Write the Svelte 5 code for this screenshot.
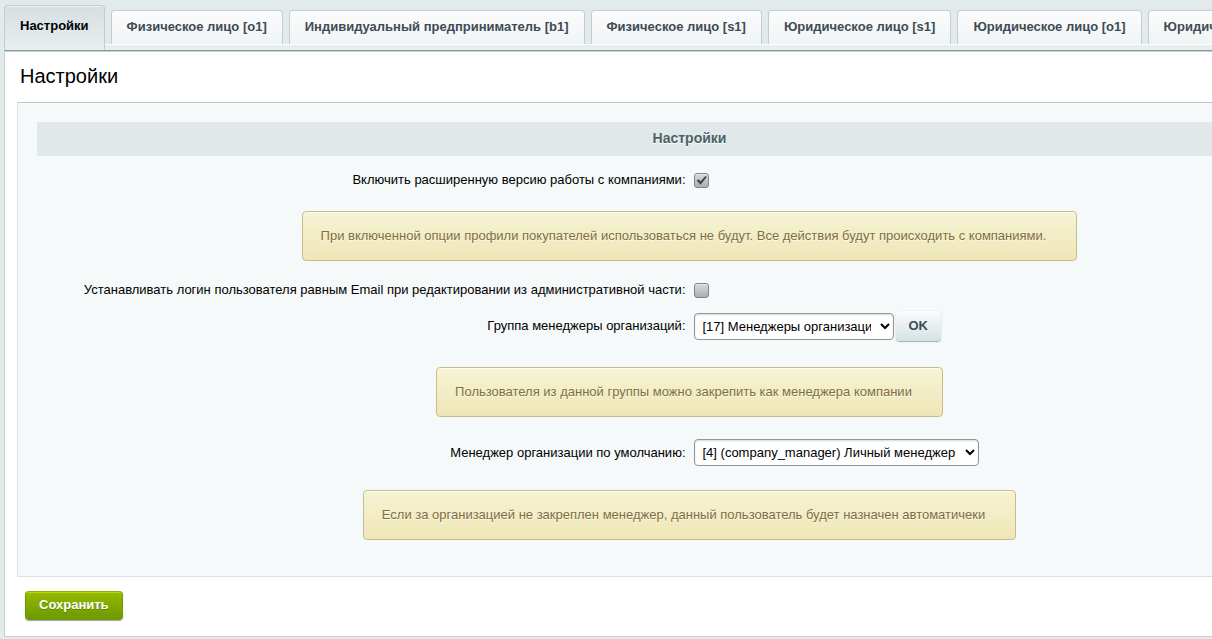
<script>
	const tabs = [
		"Настройки",
		"Физическое лицо [o1]",
		"Индивидуальный предприниматель [b1]",
		"Физическое лицо [s1]",
		"Юридическое лицо [s1]",
		"Юридическое лицо [o1]",
		"Юридическое лицо [b1]",
	];

	let current = 0;
	let extended = true;
	let emailLogin = false;
	let group = "17";
	let manager = "4";
</script>

<div class="page">
	<div class="tabs" role="tablist">
		{#each tabs as tab, i}
			<button
				type="button"
				role="tab"
				class="tab"
				class:active={current === i}
				aria-selected={current === i}
				on:click={() => (current = i)}>{tab}</button
			>
		{/each}
	</div>
	<div class="strip"></div>

	<form class="content" on:submit|preventDefault>
		<h1>Настройки</h1>

		<div class="panel">
			<h2>Настройки</h2>

			<div class="row">
				<label for="extended">Включить расширенную версию работы с компаниями:</label>
				<div class="field">
					<span class="check">
						<input id="extended" type="checkbox" bind:checked={extended} />
						<svg viewBox="0 0 15 15" aria-hidden="true">
							<path d="M2.6 7.6 L4.8 6.3 L6.4 8.6 L11.4 3 L12.8 4.1 L6.6 11.8 Z" />
						</svg>
					</span>
				</div>
			</div>
			<div class="note">
				При включенной опции профили покупателей использоваться не будут. Все действия будут происходить с компаниями.
			</div>

			<div class="row">
				<label for="email">Устанавливать логин пользователя равным Email при редактировании из административной части:</label>
				<div class="field">
					<span class="check">
						<input id="email" type="checkbox" bind:checked={emailLogin} />
						<svg viewBox="0 0 15 15" aria-hidden="true">
							<path d="M2.6 7.6 L4.8 6.3 L6.4 8.6 L11.4 3 L12.8 4.1 L6.6 11.8 Z" />
						</svg>
					</span>
				</div>
			</div>
			<div class="row with-button">
				<label for="group">Группа менеджеры организаций:</label>
				<div class="field">
					<select id="group" class="short" bind:value={group}>
						<option value="17">[17] Менеджеры организации</option>
					</select>
					<button type="button" class="ok">OK</button>
				</div>
			</div>
			<div class="note">Пользователя из данной группы можно закрепить как менеджера компании</div>

			<div class="row with-select">
				<label for="manager">Менеджер организации по умолчанию:</label>
				<div class="field">
					<select id="manager" bind:value={manager}>
						<option value="4">[4] (company_manager) Личный менеджер</option>
					</select>
				</div>
			</div>
			<div class="note">Если за организацией не закреплен менеджер, данный пользователь будет назначен автоматичеки</div>
		</div>

		<button type="submit" class="save">Сохранить</button>
	</form>
</div>

<style>
	:global(body) {
		background: #e2eaec;
	}

	.page {
		box-sizing: border-box;
		min-height: 100vh;
		padding: 5px 0 2px 4px;
		overflow: hidden;
		color: #000;
		font: 13px/16px "Liberation Sans", Arial, sans-serif;
	}

	button,
	select {
		font-family: inherit;
		font-size: 13px;
	}

	/* Tabs */

	.tabs {
		display: flex;
		align-items: flex-end;
		gap: 6px;
	}

	.tab {
		box-sizing: border-box;
		flex: none;
		height: 34px;
		padding: 0 15px 2px;
		border: 1px solid #c3cdd0;
		border-bottom: 0;
		border-radius: 4px 4px 0 0;
		background: linear-gradient(#fbfcfc, #f0f4f5);
		box-shadow: inset 0 1px #fff;
		color: #3f4b54;
		font-weight: bold;
		white-space: nowrap;
		cursor: pointer;
	}

	.tab.active {
		position: relative;
		height: 45px;
		margin-bottom: -6px;
		padding-bottom: 5px;
		background: linear-gradient(#d6dfe2, #e7eeef);
		box-shadow: inset 0 1px #eef3f4;
		color: #000;
	}

	.strip {
		height: 7px;
		box-sizing: border-box;
		border-top: 1px solid #fff;
		border-bottom: 1px solid #8b9799;
		border-left: 1px solid #c3cdd0;
		background: #e7eeef;
	}

	/* Content */

	.content {
		padding: 12px 0 16px 12px;
		border: 1px solid #c3cfd3;
		border-right: 0;
		background: #fff;
	}

	h1 {
		margin: 0 0 14px 3px;
		font-size: 20px;
		font-weight: normal;
		line-height: 24px;
	}

	/* the form is wider than the visible area and is clipped on the right */
	.panel {
		margin-right: -150px;
		padding: 19px 19px 20px;
		border: 1px solid #d7e2e9;
		border-top-color: #bdc8cc;
		background: #f5f9f9;
	}

	h2 {
		margin: 0 0 11px;
		padding-bottom: 2px;
		background: #e0e8ea;
		color: #4b6267;
		font-size: 14px;
		line-height: 32px;
		text-align: center;
		text-shadow: 0 1px #fff;
	}

	.row {
		display: grid;
		grid-template-columns: 1fr 1fr;
		align-items: center;
		min-height: 26px;
	}

	.with-select {
		min-height: 39px;
	}

	.with-button {
		min-height: 46px;
	}

	.row label {
		padding-right: 4px;
		text-align: right;
	}

	.field {
		display: flex;
		align-items: center;
		gap: 2px;
		padding-left: 4px;
	}

	.note {
		box-sizing: border-box;
		width: fit-content;
		margin: 18px auto 16px;
		padding: 16px 30px 16px 18px;
		border: 1px solid #c9bc8a;
		border-radius: 4px;
		background: linear-gradient(#f6f4d5, #eee6b6);
		box-shadow: inset 0 1px #fffde9;
		color: #7d6e48;
		text-shadow: 0 1px #fff9d9;
	}

	.check {
		position: relative;
		width: 15px;
		height: 15px;
	}

	.check input {
		display: block;
		box-sizing: border-box;
		width: 15px;
		height: 15px;
		margin: 0;
		appearance: none;
		border: 1px solid #7e8588;
		border-radius: 3px;
		background: linear-gradient(#d7dadc, #a9afb2);
		box-shadow: inset 0 1px #e6e8e9;
	}

	.check svg {
		display: none;
		position: absolute;
		inset: 0;
		fill: #3f474a;
		pointer-events: none;
	}

	.check input:checked + svg {
		display: block;
	}

	select {
		height: 27px;
		padding: 0 6px 0 4px;
		border: 1px solid #8f9798;
		border-radius: 4px;
		background: #fff;
		box-shadow: inset 0 1px 2px #d5dadc;
		color: #000;
	}

	.short {
		width: 200px;
	}

	.ok {
		height: 30px;
		padding: 0 13px 2px;
		border: 0;
		border-radius: 4px;
		background: linear-gradient(#fbfcfd, #d5e1e4);
		box-shadow: 0 1px 1px #a3adb0, 0 0 1px #b4bec1;
		color: #3f4b54;
		font-weight: bold;
		cursor: pointer;
	}

	.save {
		display: block;
		height: 29px;
		margin: 14px 0 0 8px;
		padding: 0 13px 2px;
		border: 1px solid #6f9c00;
		border-top-color: #86ad00;
		border-radius: 4px;
		background: linear-gradient(#96ba00, #6d9900);
		box-shadow: inset 0 1px #b9d800, 0 1px 1px #9aa5a0;
		color: #fff;
		font-weight: bold;
		text-shadow: 0 1px #5c8200;
		cursor: pointer;
	}
</style>
